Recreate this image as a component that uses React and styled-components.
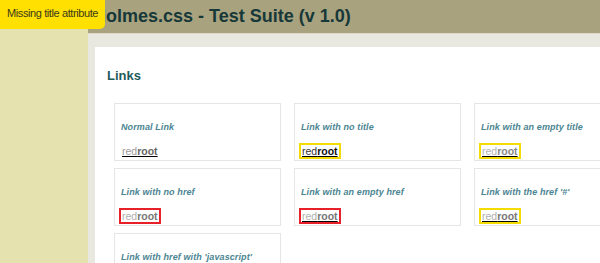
import React from 'react';
import styled, { createGlobalStyle } from 'styled-components';

const GlobalStyle = createGlobalStyle`
  html, body {
    margin: 0;
    padding: 0;
    background: #e6e2b0;
    font-family: "Liberation Sans", Arial, sans-serif;
  }
`;

const Page = styled.div`
  position: relative;
  display: flex;
  width: 600px;
  height: 263px;
  overflow: hidden;
`;

const Sidebar = styled.div`
  width: 88px;
  flex-shrink: 0;
  background: #e6e2b0;
`;

const Main = styled.div`
  flex: 1;
  display: flex;
  flex-direction: column;
  min-width: 0;
`;

const Header = styled.h1`
  margin: 0;
  height: 33px;
  padding-left: 5px;
  background: #a8a27f;
  color: #163838;
  font-size: 18px;
  font-weight: bold;
  line-height: 33px;
  white-space: nowrap;
`;

const Frame = styled.div`
  flex: 1;
  padding: 13px 0 0 7px;
  background: #e9e8e0;
  border-top: 1px solid #dcd9c8;
`;

const Content = styled.div`
  height: 100%;
  background: #fff;
  padding: 21px 0 0 12px;
`;

const Title = styled.h2`
  margin: 0 0 20px;
  font-size: 13px;
  font-weight: bold;
  color: #1f5b5b;
`;

const Grid = styled.div`
  display: grid;
  grid-template-columns: repeat(3, 167px);
  grid-auto-rows: 58px;
  column-gap: 13px;
  row-gap: 7px;
  margin-left: 7px;
`;

const Card = styled.div`
  border: 1px solid #e6e6e6;
  padding: 18px 0 0 6px;
  box-sizing: border-box;
`;

const Label = styled.div`
  font-size: 9px;
  font-weight: bold;
  font-style: italic;
  letter-spacing: 0.1px;
  color: #4b8592;
  margin-bottom: 9px;
`;

const Sample = styled.span`
  display: inline-block;
  font-size: 10.5px;
  line-height: 12px;
  text-decoration: ${p => (p.$plain ? 'none' : 'underline')};
  outline: ${p => (p.$flag ? `2px solid ${p.$flag}` : 'none')};
  outline-offset: 0;
  padding: 0 1px;
`;

const Red = styled.span`
  color: ${p => p.$tone};
`;

const Root = styled.span`
  font-weight: bold;
  color: ${p => p.$tone};
`;

const Tooltip = styled.div`
  position: absolute;
  left: 0;
  top: 0;
  width: 105px;
  height: 29px;
  box-sizing: border-box;
  padding: 7px 0 0 7px;
  background: #ffe000;
  border-bottom-right-radius: 5px;
  color: #3a3a1a;
  font-size: 11px;
  letter-spacing: -0.4px;
  white-space: nowrap;
`;

const links = [
  { label: 'Normal Link', red: '#9a9a9a', root: '#666' },
  { label: 'Link with no title', red: '#333', root: '#111', flag: '#f5dc00' },
  { label: 'Link with an empty title', red: '#b5b5b5', root: '#8a8a8a', flag: '#f5dc00' },
  { label: 'Link with no href', red: '#b0b0b0', root: '#777', flag: '#e8202a', plain: true },
  { label: 'Link with an empty href', red: '#b0b0b0', root: '#777', flag: '#e8202a' },
  { label: "Link with the href '#'", red: '#b0b0b0', root: '#777', flag: '#f5dc00' },
  { label: "Link with href with 'javascript'", red: '#b0b0b0', root: '#777', flag: '#e8202a' },
];

const App = () => (
  <Page>
    <GlobalStyle />
    <Sidebar />
    <Main>
      <Header>Holmes.css - Test Suite (v 1.0)</Header>
      <Frame>
        <Content>
          <Title>Links</Title>
          <Grid>
            {links.map(l => (
              <Card key={l.label}>
                <Label>{l.label}</Label>
                <Sample $flag={l.flag} $plain={l.plain}>
                  <Red $tone={l.red}>red</Red>
                  <Root $tone={l.root}>root</Root>
                </Sample>
              </Card>
            ))}
          </Grid>
        </Content>
      </Frame>
    </Main>
    <Tooltip>Missing title attribute</Tooltip>
  </Page>
);

export default App;
